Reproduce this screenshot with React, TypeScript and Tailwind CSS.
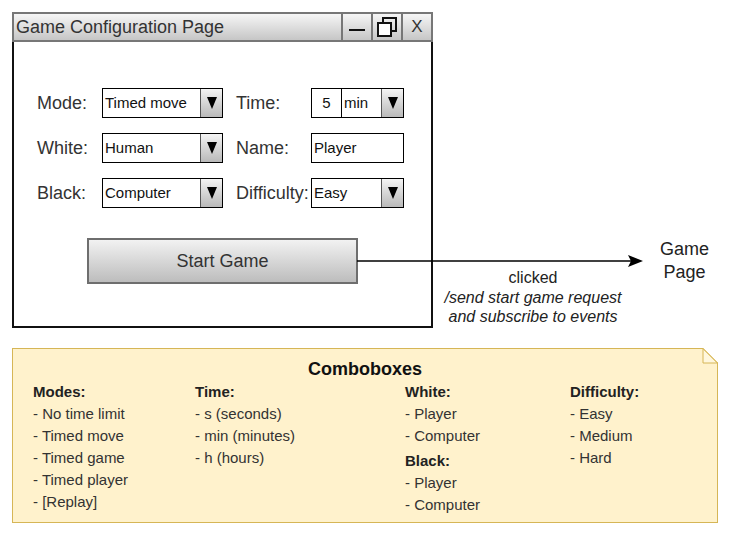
import React from 'react';

const font = "font-['Liberation_Sans',Arial,sans-serif]";

function DownArrow() {
  return (
    <div className="flex w-[22px] items-center justify-center border-l border-[#555] bg-gradient-to-b from-[#f4f4f4] to-[#b9b9b9]">
      <svg width="10" height="12" viewBox="0 0 10 12">
        <polygon points="0,0 10,0 5,12" fill="#000" />
      </svg>
    </div>
  );
}

function ComboBox({ value, width }: { value: string; width: string }) {
  return (
    <div className={`flex h-[30px] border border-black bg-white ${width}`}>
      <div className="flex flex-1 items-center pl-[2px] text-[15px] text-[#111]">{value}</div>
      <DownArrow />
    </div>
  );
}

function FormLabel({ children, width }: { children: React.ReactNode; width: string }) {
  return <div className={`flex h-[30px] items-center text-[18px] text-[#333] ${width}`}>{children}</div>;
}

function NoteColumn({ title, items, className }: { title: string; items: string[]; className?: string }) {
  return (
    <div className={className}>
      <div className="text-[15px] font-bold leading-[22px] text-[#222]">{title}</div>
      {items.map((item) => (
        <div key={item} className="text-[15px] leading-[22px] text-[#333]">
          - {item}
        </div>
      ))}
    </div>
  );
}

export default function App() {
  return (
    <div className={`relative h-[539px] w-[734px] overflow-hidden bg-white ${font}`}>
      <div className="flex pl-[12px] pt-[12px]">
        {/* window mockup */}
        <div className="flex w-[421px] flex-col">
          <div className="flex h-[30px] border-2 border-[#777] bg-gradient-to-b from-[#f6f6f6] to-[#c6c6c6]">
            <div className="flex flex-1 items-center pl-[2px] text-[18px] text-[#333]">Game Configuration Page</div>
            <div className="flex w-[30px] items-center justify-center border-l-2 border-[#777]">
              <div className="mt-[6px] h-[2px] w-[16px] bg-[#111]" />
            </div>
            <div className="flex w-[30px] items-center justify-center border-l-2 border-[#777]">
              <svg width="22" height="22" viewBox="0 0 22 22">
                <rect x="7" y="2" width="13" height="13" fill="none" stroke="#111" strokeWidth="2" />
                <rect x="2" y="7" width="13" height="13" fill="#fff" stroke="#111" strokeWidth="2" />
              </svg>
            </div>
            <div className="flex w-[30px] items-center justify-center border-l-2 border-[#777] text-[17px] text-[#333]">
              X
            </div>
          </div>
          <div className="h-[286px] border-2 border-t-0 border-[#111] bg-white pl-[23px] pt-[46px]">
            <div className="flex flex-col gap-[15px]">
              <div className="flex">
                <FormLabel width="w-[65px]">Mode:</FormLabel>
                <ComboBox value="Timed move" width="w-[121px]" />
                <FormLabel width="w-[75px] ml-[13px]">Time:</FormLabel>
                <div className="flex h-[30px] w-[93px] border border-black bg-white">
                  <div className="flex w-[30px] items-center justify-center border-r border-black text-[15px] text-[#111]">5</div>
                  <div className="flex flex-1 items-center pl-[2px] text-[15px] text-[#111]">min</div>
                  <DownArrow />
                </div>
              </div>
              <div className="flex">
                <FormLabel width="w-[65px]">White:</FormLabel>
                <ComboBox value="Human" width="w-[121px]" />
                <FormLabel width="w-[75px] ml-[13px]">Name:</FormLabel>
                <div className="flex h-[30px] w-[93px] items-center border border-black bg-white pl-[2px] text-[15px] text-[#111]">
                  Player
                </div>
              </div>
              <div className="flex">
                <FormLabel width="w-[65px]">Black:</FormLabel>
                <ComboBox value="Computer" width="w-[121px]" />
                <FormLabel width="w-[75px] ml-[13px]">Difficulty:</FormLabel>
                <ComboBox value="Easy" width="w-[93px]" />
              </div>
            </div>
            <button className="ml-[50px] mt-[30px] flex h-[46px] w-[271px] items-center justify-center border-2 border-[#6e6e6e] bg-gradient-to-b from-[#f2f2f2] to-[#bdbdbd] text-[18px] text-[#333]">
              Start Game
            </button>
          </div>
        </div>
        <div className="flex flex-1 flex-col items-center pl-[202px] pt-[226px] text-[18px] leading-[23px] text-[#222]">
          <span>Game</span>
          <span>Page</span>
        </div>
      </div>

      {/* transition arrow */}
      <svg className="absolute left-0 top-0" width="734" height="539">
        <line x1="357" y1="261" x2="632" y2="261" stroke="#000" strokeWidth="1.5" />
        <polygon points="628,255 643,261 628,267 631,261" fill="#000" />
      </svg>
      <div className="absolute left-[433px] top-[268px] w-[200px] text-center text-[16px] leading-[19.5px] text-[#222]">
        <div>clicked</div>
        <div className="italic">/send start game request</div>
        <div className="italic">and subscribe to events</div>
      </div>

      {/* note */}
      <div className="relative ml-[12px] mt-[20px] h-[175px] w-[706px] border border-[#d6b656] bg-[#fff2cc] pt-[9px]">
        <div className="text-center text-[18px] font-bold leading-[22px] text-[#111]">Comboboxes</div>
        <div className="flex pl-[20px] pt-[1px]">
          <NoteColumn className="w-[162px]" title="Modes:" items={['No time limit', 'Timed move', 'Timed game', 'Timed player', '[Replay]']} />
          <NoteColumn className="w-[210px]" title="Time:" items={['s (seconds)', 'min (minutes)', 'h (hours)']} />
          <div className="w-[165px]">
            <NoteColumn title="White:" items={['Player', 'Computer']} />
            <NoteColumn className="mt-[3px]" title="Black:" items={['Player', 'Computer']} />
          </div>
          <NoteColumn title="Difficulty:" items={['Easy', 'Medium', 'Hard']} />
        </div>
        <svg className="absolute right-[-1px] top-[-1px]" width="16" height="16" viewBox="0 0 16 16">
          <polygon points="1,0 16,0 16,15" fill="#fff" />
          <polygon points="1,0.5 1,15 15.5,15" fill="#fff7dd" stroke="#d6b656" strokeWidth="1" />
          <line x1="1" y1="0.5" x2="15.5" y2="15" stroke="#d6b656" strokeWidth="1" />
        </svg>
      </div>
    </div>
  );
}
